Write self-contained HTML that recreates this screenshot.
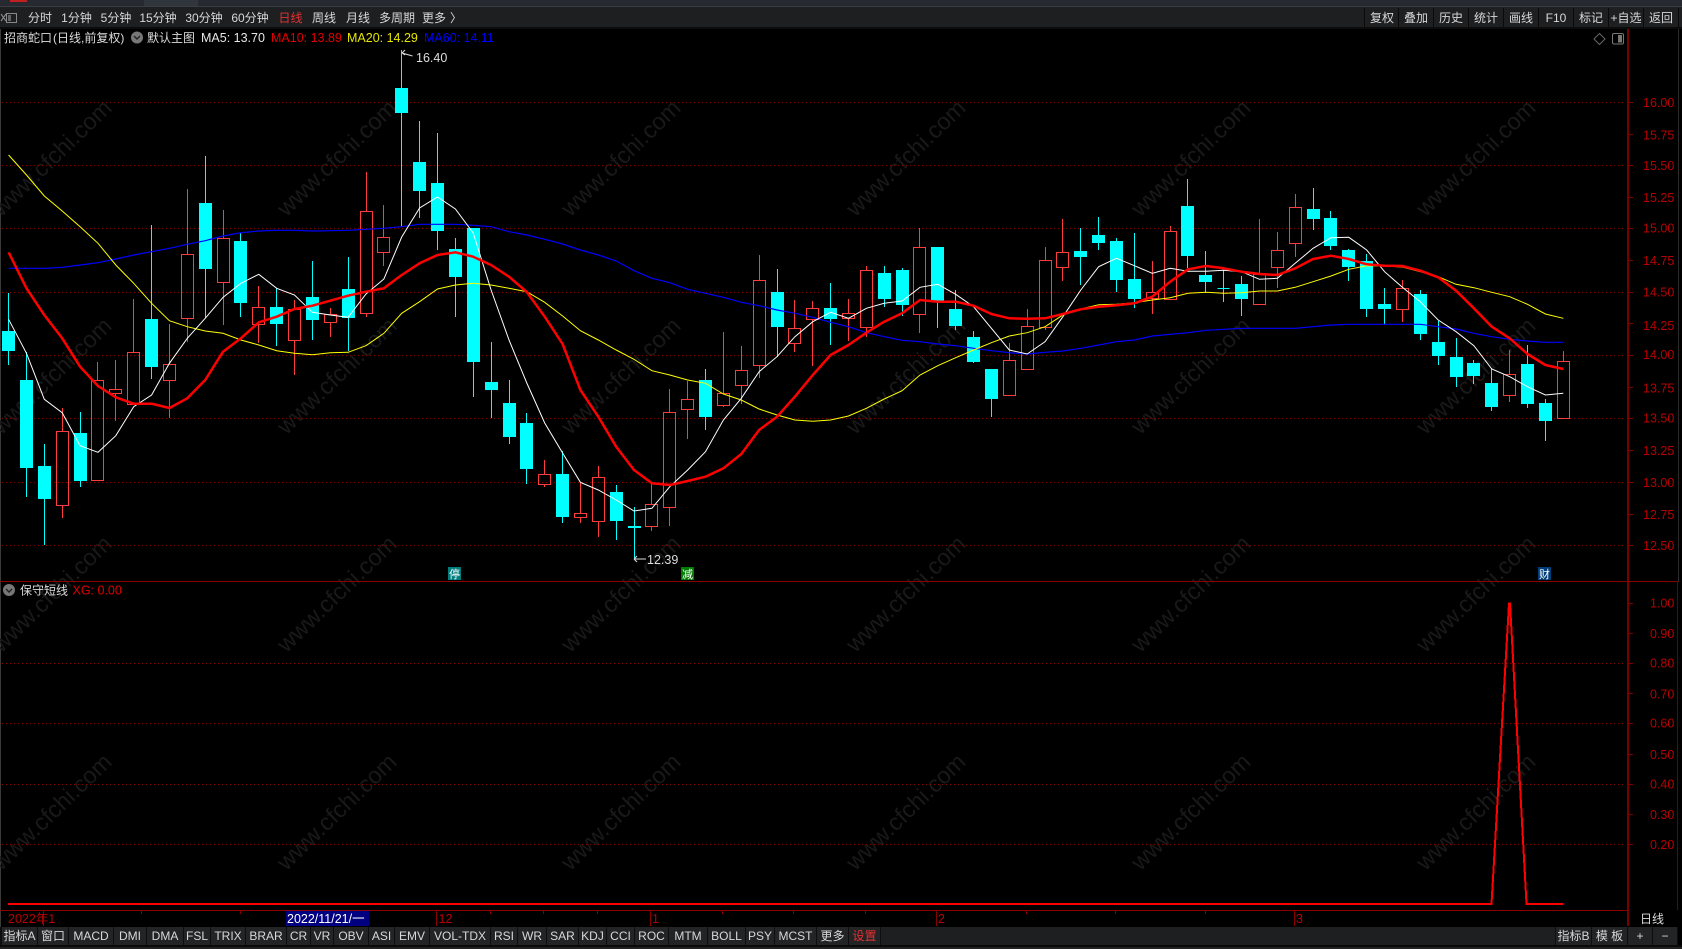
<!DOCTYPE html>
<html><head><meta charset="utf-8"><title>招商蛇口</title>
<style>
html,body{margin:0;padding:0;background:#000;width:1682px;height:949px;overflow:hidden}
svg{display:block}
text{font-family:"Liberation Sans","Noto Sans CJK SC",sans-serif;font-size:12px}
.tb text{fill:#d8d8d8;text-anchor:middle}
.ax text{fill:#b80000;font-size:12.5px}
.wm text{fill:#191919;font-size:23.5px;text-anchor:middle}
.btn rect{fill:#232426}
.g{stroke:#8c0000;stroke-width:1;stroke-dasharray:1 3;fill:none;shape-rendering:crispEdges}
</style></head><body>
<svg width="1682" height="949" viewBox="0 0 1682 949" xmlns="http://www.w3.org/2000/svg">
<rect width="1682" height="949" fill="#000"/>
<!-- title strip -->
<rect width="1682" height="6" fill="#262a30"/>
<rect x="144" width="54" height="6" fill="#31363d"/>
<rect x="10" width="17" height="2" fill="#c02020"/>
<rect y="6" width="1682" height="1" fill="#3a3e44"/>
<rect y="7" width="1682" height="20" fill="#1e1f21"/>
<rect y="27" width="1682" height="2" fill="#0c0c0c"/>
<!-- left border -->
<rect x="0" y="29" width="1" height="898" fill="#3a3a3a"/>
<!-- watermarks -->
<g class="wm">
<text x="51" y="166" transform="rotate(-44 51 157)">www.cfchi.com</text><text x="336" y="166" transform="rotate(-44 336 157)">www.cfchi.com</text><text x="620" y="166" transform="rotate(-44 620 157)">www.cfchi.com</text><text x="905" y="166" transform="rotate(-44 905 157)">www.cfchi.com</text><text x="1190" y="166" transform="rotate(-44 1190 157)">www.cfchi.com</text><text x="1475" y="166" transform="rotate(-44 1475 157)">www.cfchi.com</text>
<text x="51" y="384" transform="rotate(-44 51 375)">www.cfchi.com</text><text x="336" y="384" transform="rotate(-44 336 375)">www.cfchi.com</text><text x="620" y="384" transform="rotate(-44 620 375)">www.cfchi.com</text><text x="905" y="384" transform="rotate(-44 905 375)">www.cfchi.com</text><text x="1190" y="384" transform="rotate(-44 1190 375)">www.cfchi.com</text><text x="1475" y="384" transform="rotate(-44 1475 375)">www.cfchi.com</text>
<text x="51" y="602" transform="rotate(-44 51 593)">www.cfchi.com</text><text x="336" y="602" transform="rotate(-44 336 593)">www.cfchi.com</text><text x="620" y="602" transform="rotate(-44 620 593)">www.cfchi.com</text><text x="905" y="602" transform="rotate(-44 905 593)">www.cfchi.com</text><text x="1190" y="602" transform="rotate(-44 1190 593)">www.cfchi.com</text><text x="1475" y="602" transform="rotate(-44 1475 593)">www.cfchi.com</text>
<text x="51" y="820" transform="rotate(-44 51 811)">www.cfchi.com</text><text x="336" y="820" transform="rotate(-44 336 811)">www.cfchi.com</text><text x="620" y="820" transform="rotate(-44 620 811)">www.cfchi.com</text><text x="905" y="820" transform="rotate(-44 905 811)">www.cfchi.com</text><text x="1190" y="820" transform="rotate(-44 1190 811)">www.cfchi.com</text><text x="1475" y="820" transform="rotate(-44 1475 811)">www.cfchi.com</text>
</g>
<!-- grid -->
<path class="g" d="M2 102.5H1625M2 165.5H1625M2 228.5H1625M2 292.5H1625M2 355.5H1625M2 418.5H1625M2 482.5H1625M2 545.5H1625M2 663.5H1625M2 723.5H1625M2 784.5H1625M2 844.5H1625"/>
<!-- candles -->
<path fill="#0ff" stroke="#0ff" stroke-width="1" shape-rendering="crispEdges" d="M8.5 293V365M2.5 331.5h12v19h-12zM26.5 352V497M20.5 380.5h12v87h-12zM44.5 444V545M38.5 466.5h12v32h-12zM80.5 412V487M74.5 433.5h12v47h-12zM151.5 225V379M145.5 319.5h12v47h-12zM205.5 156V318M199.5 203.5h12v65h-12zM240.5 233V317M234.5 241.5h12v61h-12zM276.5 288V346M270.5 307.5h12v16h-12zM312.5 261V340M306.5 297.5h12v22h-12zM348.5 257V351M342.5 289.5h12v28h-12zM401.5 50V227M395.5 88.5h12v24h-12zM419.5 121V218M413.5 162.5h12v28h-12zM437.5 133V250M431.5 183.5h12v47h-12zM455.5 238V317M449.5 249.5h12v27h-12zM473.5 228V397M467.5 228.5h12v133h-12zM491.5 342V418M485.5 382.5h12v7h-12zM509.5 380V444M503.5 403.5h12v33h-12zM526.5 413V484M520.5 423.5h12v45h-12zM562.5 451V523M556.5 474.5h12v42h-12zM616.5 485V540M610.5 492.5h12v28h-12zM634.5 507V559M628.5 526.5h12v1h-12zM705.5 369V430M699.5 380.5h12v36h-12zM777.5 269V357M771.5 292.5h12v34h-12zM830.5 283V345M824.5 308.5h12v10h-12zM884.5 266V307M878.5 273.5h12v25h-12zM902.5 268V316M896.5 270.5h12v34h-12zM937.5 247V328M931.5 247.5h12v54h-12zM955.5 290V330M949.5 309.5h12v16h-12zM973.5 331V363M967.5 337.5h12v24h-12zM991.5 369V417M985.5 369.5h12v29h-12zM1080.5 228V285M1074.5 251.5h12v5h-12zM1098.5 217V250M1092.5 235.5h12v7h-12zM1116.5 238V292M1110.5 241.5h12v38h-12zM1134.5 233V308M1128.5 279.5h12v19h-12zM1187.5 179V268M1181.5 206.5h12v49h-12zM1205.5 251V292M1199.5 275.5h12v6h-12zM1223.5 270V302M1217.5 288.5h12M1241.5 276V316M1235.5 284.5h12v14h-12zM1313.5 188V230M1307.5 209.5h12v9h-12zM1330.5 211V250M1324.5 218.5h12v27h-12zM1348.5 249V281M1342.5 250.5h12v16h-12zM1366.5 254V317M1360.5 261.5h12v47h-12zM1384.5 288V324M1378.5 304.5h12v4h-12zM1420.5 290V340M1414.5 294.5h12v39h-12zM1438.5 321V365M1432.5 342.5h12v13h-12zM1456.5 338V387M1450.5 357.5h12v19h-12zM1473.5 360V384M1467.5 363.5h12v12h-12zM1491.5 368V411M1485.5 383.5h12v23h-12zM1527.5 345V408M1521.5 364.5h12v39h-12zM1545.5 399V441M1539.5 403.5h12v17h-12z"/>
<path fill="none" stroke="#ff3c3c" stroke-width="1" shape-rendering="crispEdges" d="M62.5 408V431M62.5 505V518M56.5 431.5h12v74h-12zM97.5 362V380M91.5 380.5h12v100h-12zM115.5 360V389M115.5 393V421M109.5 389.5h12v4h-12zM133.5 299V352M127.5 352.5h12v52h-12zM169.5 324V364M169.5 380V418M163.5 364.5h12v16h-12zM187.5 189V254M187.5 318V342M181.5 254.5h12v64h-12zM223.5 210V238M223.5 282V325M217.5 238.5h12v44h-12zM258.5 286V307M258.5 324V343M252.5 307.5h12v17h-12zM294.5 300V309M294.5 340V375M288.5 309.5h12v31h-12zM330.5 308V314M330.5 322V337M324.5 314.5h12v8h-12zM366.5 172V211M366.5 313V317M360.5 211.5h12v102h-12zM383.5 205V237M383.5 252V266M377.5 237.5h12v15h-12zM544.5 460V474M544.5 484V487M538.5 474.5h12v10h-12zM580.5 483V513M580.5 517V523M574.5 513.5h12v4h-12zM598.5 466V477M598.5 521V537M592.5 477.5h12v44h-12zM651.5 483V504M651.5 526V531M645.5 504.5h12v22h-12zM669.5 389V412M669.5 507V526M663.5 412.5h12v95h-12zM687.5 381V399M687.5 409V439M681.5 399.5h12v10h-12zM723.5 332V393M723.5 405V407M717.5 393.5h12v12h-12zM741.5 346V370M741.5 385V404M735.5 370.5h12v15h-12zM759.5 255V280M759.5 365V378M753.5 280.5h12v85h-12zM794.5 300V328M794.5 343V352M788.5 328.5h12v15h-12zM812.5 301V308M812.5 319V366M806.5 308.5h12v11h-12zM848.5 299V313M848.5 318V341M842.5 313.5h12v5h-12zM866.5 266V270M866.5 327V337M860.5 270.5h12v57h-12zM919.5 228V247M919.5 314V333M913.5 247.5h12v67h-12zM1009.5 343V360M1003.5 360.5h12v35h-12zM1027.5 309V326M1027.5 369V370M1021.5 326.5h12v43h-12zM1045.5 247V260M1045.5 327V330M1039.5 260.5h12v67h-12zM1062.5 219V252M1062.5 267V281M1056.5 252.5h12v15h-12zM1152.5 261V292M1152.5 298V314M1146.5 292.5h12v6h-12zM1170.5 226V231M1164.5 231.5h12v68h-12zM1259.5 219V274M1253.5 274.5h12v30h-12zM1277.5 232V250M1277.5 267V288M1271.5 250.5h12v17h-12zM1295.5 194V207M1295.5 243V257M1289.5 207.5h12v36h-12zM1402.5 280V288M1402.5 309V322M1396.5 288.5h12v21h-12zM1509.5 350V374M1509.5 395V402M1503.5 374.5h12v21h-12zM1563.5 351V361M1557.5 361.5h12v57h-12z"/>
<!-- MA60 -->
<polyline fill="none" stroke="#0000ff" stroke-width="1.2" points="8.6,268.3 26.5,268.3 44.3,268.3 62.2,267.3 80.1,265 98,262.7 115.8,259 133.7,255 151.6,251.7 169.4,248.3 187.3,244.3 205.2,240.7 223,236 240.9,232.7 258.8,231 276.7,230.3 294.5,230.3 312.4,231 330.3,230.7 348.1,230.3 366,229.3 383.9,228.3 401.7,226.7 419.6,224.3 437.5,224.3 455.4,224.3 473.2,225.3 491.1,226.7 509,231.7 526.8,235 544.7,239.3 562.6,244 580.4,250 598.3,255 616.2,261 634,270.7 651.9,278.3 669.8,282.7 687.7,289.3 705.5,293.3 723.4,297.3 741.3,302.3 759.1,305.7 777,310 794.9,313.3 812.8,317.3 830.6,322.3 848.5,326.7 866.4,332.7 884.2,336.7 902.1,340.3 920,341.7 937.8,344 955.7,345.7 973.6,348.3 991.4,350.7 1009.3,352.7 1027.2,354 1045.1,352.3 1062.9,351 1080.8,348.3 1098.7,345 1116.5,341.7 1134.4,340 1152.3,336 1170.2,334.3 1188,332.7 1205.9,330.3 1223.8,329.3 1241.6,328.3 1259.5,328.3 1277.4,328.3 1295.2,328.3 1313.1,326.7 1331,325 1348.8,324.3 1366.7,324.3 1384.6,324.3 1402.4,324.3 1420.3,324.3 1438.2,326.7 1456.1,329 1473.9,333.3 1491.8,336.7 1509.7,339.3 1527.5,341 1545.4,342.3 1563.3,342.3"/>
<!-- MA20 -->
<polyline fill="none" stroke="#ffff00" stroke-width="1" points="8.6,155 26.5,175 44.3,196 62.2,211 80.1,226.7 98,243.3 115.8,265 133.7,283.3 151.6,303.3 169.4,320.7 187.3,326.7 205.2,331 223,333.3 240.9,340 258.8,345 276.7,350.7 294.5,353.3 312.4,354.7 330.3,352.7 348.1,352.3 366,345.7 383.9,333.3 401.7,313.3 419.6,301.7 437.5,289 455.4,285 473.2,283.3 491.1,285 509,288.3 526.8,291.7 544.7,302.3 562.6,316 580.4,330.7 598.3,340 616.2,350 634,359.3 651.9,370.7 669.8,375 687.7,380 705.5,383.3 723.4,394 741.3,400 759.1,409 777,415 794.9,420 812.8,421.3 830.6,420 848.5,416 866.4,408.3 884.2,399 902.1,390.7 920,375 937.8,365.7 955.7,357.7 973.6,350 991.4,342.7 1009.3,336 1027.2,332.7 1045.1,326.7 1062.9,315 1080.8,309 1098.7,304.7 1116.5,304.3 1134.4,302.7 1152.3,300 1170.2,297.7 1188,293.3 1205.9,292.3 1223.8,293.3 1241.6,292.7 1259.5,291 1277.4,291 1295.2,287.3 1313.1,281.7 1331,276 1348.8,269.3 1366.7,265.7 1384.6,266 1402.4,267 1420.3,271.7 1438.2,276.7 1456.1,284.3 1473.9,287.7 1491.8,292.3 1509.7,296.7 1527.5,304.3 1545.4,314 1563.3,318.3"/>
<!-- MA5 -->
<polyline fill="none" stroke="#ffffff" stroke-width="1" points="8.6,319.3 26.5,353.3 44.3,399.3 62.2,412.7 80.1,445.7 98,452.3 115.8,435.7 133.7,406.7 151.6,395 169.4,363.3 187.3,338.3 205.2,318.3 223,297.3 240.9,283.3 258.8,274.3 276.7,288.3 294.5,295 312.4,312.3 330.3,315 348.1,317.3 366,294 383.9,279 401.7,237 419.6,208 437.5,197 455.4,209 473.2,233 491.1,290 509,340 526.8,383 544.7,423 562.6,453 580.4,482.3 598.3,490 616.2,500 634,511 651.9,508.3 669.8,486.7 687.7,470 705.5,451.7 723.4,420 741.3,398.3 759.1,371.7 777,356.7 794.9,336.7 812.8,321.7 830.6,312.3 848.5,318.3 866.4,308.3 884.2,303.3 902.1,301 920,287.3 937.8,284.3 955.7,294.3 973.6,306.7 991.4,328.3 1009.3,350 1027.2,354 1045.1,341.7 1062.9,316.7 1080.8,290 1098.7,266.7 1116.5,258.3 1134.4,265.7 1152.3,273.3 1170.2,268.3 1188,271.3 1205.9,271.3 1223.8,270.3 1241.6,271.7 1259.5,279.3 1277.4,278.3 1295.2,263.3 1313.1,248.3 1331,237.7 1348.8,237.3 1366.7,250 1384.6,271.7 1402.4,287.3 1420.3,301.7 1438.2,320 1456.1,331.7 1473.9,345.7 1491.8,369 1509.7,376.7 1527.5,386.7 1545.4,395 1563.3,393.3"/>
<!-- MA10 -->
<polyline fill="none" stroke="#ff0000" stroke-width="2.5" stroke-linejoin="round" points="8.6,252.3 26.5,288.3 44.3,315 62.2,338.3 80.1,366.7 98,386 115.8,397.3 133.7,403.7 151.6,403.7 169.4,408 187.3,398.3 205.2,380 223,351.7 240.9,338.3 258.8,322.3 276.7,316.7 294.5,309 312.4,305.7 330.3,300.7 348.1,295.7 366,291.7 383.9,288.3 401.7,275 419.6,263.3 437.5,255 455.4,252.3 473.2,256.7 491.1,265 509,276.7 526.8,292 544.7,316.7 562.6,344 580.4,390 598.3,416.7 616.2,446.7 634,470 651.9,483.3 669.8,485 687.7,481 705.5,476.7 723.4,468.3 741.3,454 759.1,430 777,416.7 794.9,396.7 812.8,375 830.6,355 848.5,345 866.4,332.7 884.2,321.7 902.1,313.3 920,300 937.8,301.7 955.7,301.7 973.6,305.7 991.4,314 1009.3,318.3 1027.2,318.7 1045.1,318.3 1062.9,314 1080.8,309.3 1098.7,306.7 1116.5,305.3 1134.4,303.3 1152.3,296.7 1170.2,281.7 1188,269.3 1205.9,266 1223.8,268.3 1241.6,271.7 1259.5,274 1277.4,275 1295.2,268.3 1313.1,259 1331,255.7 1348.8,259 1366.7,264.3 1384.6,265.7 1402.4,266 1420.3,270.7 1438.2,277.3 1456.1,290.7 1473.9,308.3 1491.8,326.7 1509.7,338.3 1527.5,354 1545.4,365 1563.3,369"/>
<!-- high/low markers -->
<path d="M402 53L412.5 56M402 53l3-3M402 53l3 2" stroke="#ddd" fill="none" stroke-width="1"/>
<text x="416" y="62" fill="#ddd" style="font-size:12.5px">16.40</text>
<path d="M634 559H646M634 559l3-3M634 559l3 3" stroke="#ddd" fill="none" stroke-width="1"/>
<text x="647" y="564" fill="#ddd" style="font-size:12.5px">12.39</text>
<!-- badges -->
<rect x="448" y="567" width="13" height="13" fill="#007c7c"/><text x="454.5" y="578" fill="#fff" text-anchor="middle" style="font-size:11px">停</text>
<rect x="681" y="567" width="13" height="13" fill="#007c00"/><text x="687.5" y="578" fill="#fff" text-anchor="middle" style="font-size:11px">减</text>
<rect x="1538" y="567" width="13" height="13" fill="#003c78"/><text x="1544.5" y="578" fill="#fff" text-anchor="middle" style="font-size:11px">财</text>
<!-- header info -->
<text x="4" y="42" fill="#dcdcdc">招商蛇口<tspan dx="1">(日线,前复权)</tspan></text>
<circle cx="137" cy="37.5" r="6" fill="#777"/><path d="M134 36l3 3 3-3" stroke="#222" stroke-width="1.4" fill="none"/>
<text x="147" y="42" fill="#dcdcdc">默认主图</text>
<text x="201" y="42" fill="#e6e6e6" style="font-size:12.5px">MA5: 13.70</text>
<text x="271" y="42" fill="#e00000" style="font-size:12.5px">MA10: 13.89</text>
<text x="347" y="42" fill="#e6e600" style="font-size:12.5px">MA20: 14.29</text>
<text x="424" y="42" fill="#0000ff" style="font-size:12.5px">MA60: 14.11</text>
<path d="M1599.5 33.5l5.5 5.5-5.5 5.5-5.5-5.5z" stroke="#666" fill="none"/>
<rect x="1612.5" y="33.5" width="11" height="10.5" rx="1.5" stroke="#777" fill="none"/><rect x="1618" y="35" width="4" height="7.5" fill="#777"/>
<!-- top toolbar -->
<path d="M1 14l5 7M6 14l-5 7" stroke="#999" stroke-width="1"/><rect x="6.5" y="13.5" width="10" height="9" fill="none" stroke="#888"/><rect x="8" y="15" width="3" height="6" fill="#666"/>
<g class="tb">
<text x="40" y="22">分时</text><text x="76.5" y="22">1分钟</text><text x="116" y="22">5分钟</text><text x="158" y="22">15分钟</text><text x="204" y="22">30分钟</text><text x="250" y="22">60分钟</text>
<text x="290.5" y="22" style="fill:#e83030">日线</text><text x="324" y="22">周线</text><text x="358" y="22">月线</text><text x="397" y="22">多周期</text><text x="434" y="22">更多</text><text x="456" y="22">〉</text>
</g>
<path d="M1364.5 8V27M1398.5 8V27M1433.5 8V27M1468.5 8V27M1503.5 8V27M1538.5 8V27M1573.5 8V27M1608.5 8V27M1643.5 8V27M1678.5 8V27" stroke="#0a0a0a"/>
<g class="tb">
<text x="1382" y="22">复权</text><text x="1416" y="22">叠加</text><text x="1451" y="22">历史</text><text x="1486" y="22">统计</text><text x="1521" y="22">画线</text><text x="1556" y="22">F10</text><text x="1591" y="22">标记</text><text x="1626" y="22">+自选</text><text x="1661" y="22">返回</text>
</g>
<!-- axes -->
<rect x="1627" y="29" width="2" height="897" fill="#7a0000"/>
<rect x="1677" y="582" width="1" height="328" fill="#6a0000"/>
<rect x="1678" y="29" width="1" height="553" fill="#2a2a2a"/>
<rect x="0" y="581" width="1678" height="1" fill="#8a0000"/>
<path d="M1629 102.5h4M1629 134.5h4M1629 165.5h4M1629 197.5h4M1629 228.5h4M1629 260.5h4M1629 292.5h4M1629 323.5h4M1629 355.5h4M1629 387.5h4M1629 418.5h4M1629 450.5h4M1629 482.5h4M1629 514.5h4M1629 545.5h4M1629 603.5h4M1629 633.5h4M1629 663.5h4M1629 693.5h4M1629 723.5h4M1629 754.5h4M1629 784.5h4M1629 814.5h4M1629 844.5h4" stroke="#7a0000" fill="none" shape-rendering="crispEdges"/>
<g class="ax">
<text x="1643" y="107">16.00</text><text x="1643" y="139.5">15.75</text><text x="1643" y="170">15.50</text><text x="1643" y="202">15.25</text><text x="1643" y="232.5">15.00</text><text x="1643" y="265">14.75</text><text x="1643" y="296.5">14.50</text><text x="1643" y="330">14.25</text><text x="1643" y="359">14.00</text><text x="1643" y="392.5">13.75</text><text x="1643" y="422.5">13.50</text><text x="1643" y="455">13.25</text><text x="1643" y="487">13.00</text><text x="1643" y="519">12.75</text><text x="1643" y="550">12.50</text>
<text x="1650" y="607.5">1.00</text><text x="1650" y="638">0.90</text><text x="1650" y="667.5">0.80</text><text x="1650" y="698.5">0.70</text><text x="1650" y="727.5">0.60</text><text x="1650" y="759">0.50</text><text x="1650" y="788.5">0.40</text><text x="1650" y="819">0.30</text><text x="1650" y="849">0.20</text>
</g>
<!-- lower panel -->
<circle cx="9" cy="590" r="6" fill="#777"/><path d="M6 589l3 3 3-3" stroke="#222" stroke-width="1.4" fill="none"/>
<text x="20" y="594.5" fill="#dcdcdc">保守短线</text>
<text x="72.5" y="594.5" fill="#e00000" style="font-size:12.5px">XG: 0.00</text>
<path d="M8 904H1491.5L1509 603.5L1510 603.5L1526.5 904H1563.5" fill="none" stroke="#ff0000" stroke-width="2" shape-rendering="crispEdges"/>
<!-- time axis -->
<rect x="0" y="910" width="1628" height="1" fill="#8a0000"/>
<path d="M43.5 911V926M436.5 911V926M650.5 911V926M936.5 911V926M1294.5 911V926M141.5 911v3M240.5 911v3M490.5 911v3M543.5 911v3M597.5 911v3M722.5 911v3M793.5 911v3M865.5 911v3M1026.5 911v3M1115.5 911v3M1205.5 911v3" stroke="#8a0000" fill="none" shape-rendering="crispEdges"/>
<text x="8" y="923" fill="#b80000" style="font-size:12.5px">2022年1</text>
<rect x="286" y="911" width="83" height="15" fill="#000080"/>
<text x="287" y="923" fill="#fff" style="font-size:12.5px">2022/11/21/一</text>
<text x="438.5" y="923" fill="#b80000" style="font-size:12.5px">12</text>
<text x="652" y="923" fill="#b80000" style="font-size:12.5px">1</text>
<text x="938" y="923" fill="#b80000" style="font-size:12.5px">2</text>
<text x="1296" y="923" fill="#b80000" style="font-size:12.5px">3</text>
<text x="1652" y="923" fill="#dcdcdc" text-anchor="middle">日线</text>
<!-- bottom toolbar -->
<rect y="927" width="1678" height="18" fill="#1e1f21"/>
<rect y="927" width="881" height="18" fill="#0e0e0e"/>
<rect x="1555" y="927" width="123" height="18" fill="#0e0e0e"/>
<rect y="945" width="1682" height="2" fill="#0a0a0a"/>
<rect y="947" width="1682" height="2" fill="#222"/>
<g class="btn">
<rect x="2" y="927" width="35" height="18"/><rect x="38" y="927" width="30" height="18"/><rect x="69" y="927" width="44" height="18"/><rect x="114" y="927" width="32" height="18"/><rect x="147" y="927" width="36" height="18"/><rect x="184" y="927" width="26" height="18"/><rect x="211" y="927" width="34" height="18"/><rect x="246" y="927" width="40" height="18"/><rect x="287" y="927" width="23" height="18"/><rect x="311" y="927" width="22" height="18"/><rect x="334" y="927" width="34" height="18"/><rect x="369" y="927" width="25" height="18"/><rect x="395" y="927" width="34" height="18"/><rect x="430" y="927" width="60" height="18"/><rect x="491" y="927" width="26" height="18"/><rect x="518" y="927" width="28" height="18"/><rect x="547" y="927" width="31" height="18"/><rect x="579" y="927" width="27" height="18"/><rect x="607" y="927" width="27" height="18"/><rect x="635" y="927" width="33" height="18"/><rect x="669" y="927" width="38" height="18"/><rect x="708" y="927" width="37" height="18"/><rect x="746" y="927" width="28" height="18"/><rect x="775" y="927" width="41" height="18"/><rect x="817" y="927" width="31" height="18"/><rect x="849" y="927" width="31" height="18"/>
<rect x="1556" y="927" width="35" height="18"/><rect x="1592" y="927" width="35" height="18"/><rect x="1628" y="927" width="24" height="18"/><rect x="1653" y="927" width="24" height="18"/>
</g>
<g class="tb">
<text x="19.5" y="940">指标A</text><text x="53" y="940">窗口</text><text x="91" y="940">MACD</text><text x="130" y="940">DMI</text><text x="165" y="940">DMA</text><text x="197" y="940">FSL</text><text x="228" y="940">TRIX</text><text x="266" y="940">BRAR</text><text x="298.5" y="940">CR</text><text x="322" y="940">VR</text><text x="351" y="940">OBV</text><text x="381.5" y="940">ASI</text><text x="412" y="940">EMV</text><text x="460" y="940">VOL-TDX</text><text x="504" y="940">RSI</text><text x="532" y="940">WR</text><text x="562.5" y="940">SAR</text><text x="592.5" y="940">KDJ</text><text x="620.5" y="940">CCI</text><text x="651.5" y="940">ROC</text><text x="688" y="940">MTM</text><text x="726.5" y="940">BOLL</text><text x="760" y="940">PSY</text><text x="795.5" y="940">MCST</text><text x="832.5" y="940">更多</text><text x="864.5" y="940" style="fill:#e83030">设置</text>
<text x="1573.5" y="940">指标B</text><text x="1609.5" y="940">模 板</text><text x="1640" y="940">+</text><text x="1665" y="940">−</text>
</g>
</svg>
</body></html>
